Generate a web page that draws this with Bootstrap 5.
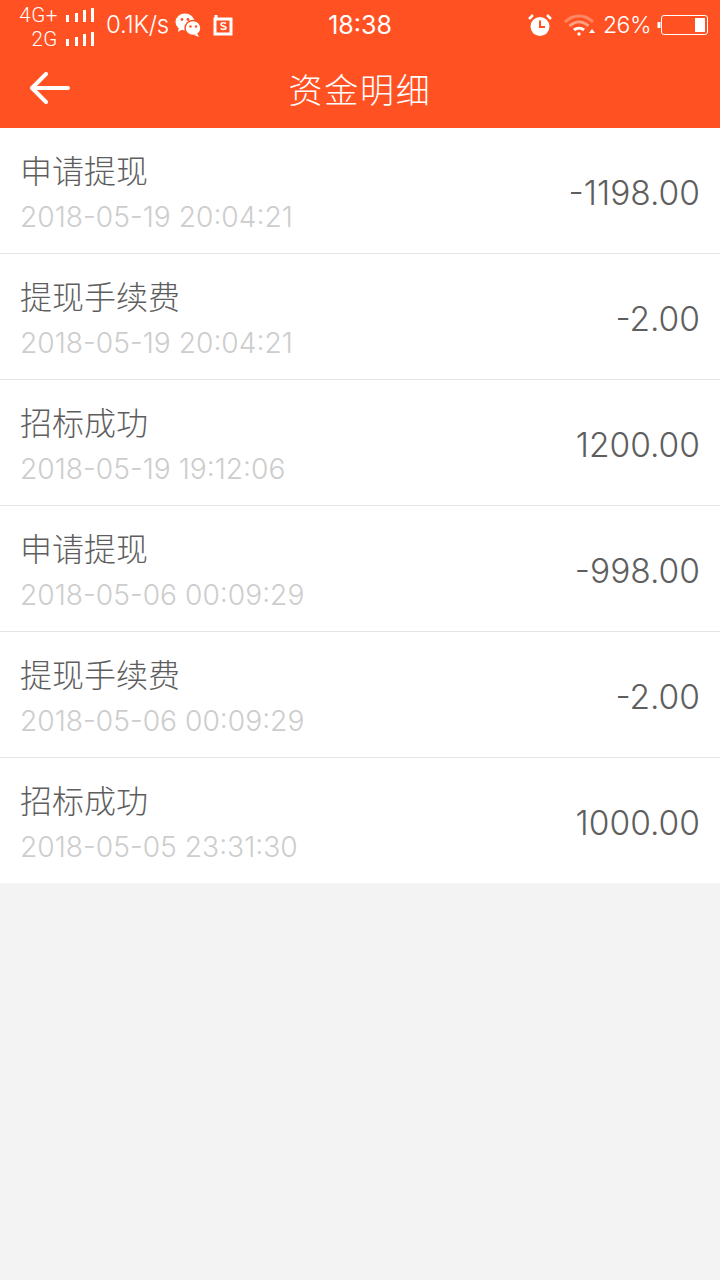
<!DOCTYPE html>
<html lang="zh"><head><meta charset="utf-8">
<link href="https://cdn.jsdelivr.net/npm/bootstrap@5.3.0/dist/css/bootstrap.min.css" rel="stylesheet">
<style>
html,body{height:100%}
body{background:#f3f3f3;width:720px;min-height:1280px;font-family:"Liberation Sans","Noto Sans CJK SC",sans-serif}
.hdr{background:#ff5122;color:#fff;height:128px}
.sbar{height:50px;padding-left:16px;padding-right:12px;font-family:Inter,"Liberation Sans",sans-serif;font-size:24px;font-weight:300}
.net{width:78px;font-family:Roboto,"Liberation Sans",sans-serif;font-size:20.500px;margin-top:4px;letter-spacing:.6px}
.netline{height:24px;line-height:24px;gap:7px}
.speed{margin-left:12px;width:65px;letter-spacing:-.3px;white-space:nowrap}
.wx{margin-left:4px}
.sim{margin-left:12px}
.clock{position:absolute;left:0;right:0;text-align:center;font-size:25px;font-weight:400;top:7px;pointer-events:none}
.pct{font-size:23px;margin-left:6px;width:49px;letter-spacing:-.5px}
.wifi{margin-left:11px}
.ttl{height:78px;position:relative}
.ttl h1{font-family:"Noto Sans CJK SC",sans-serif;font-weight:300;font-size:34px;margin:0;line-height:78px;text-align:center;letter-spacing:1.800px}
.bk{position:absolute;left:29px;top:22px}
.rw{height:126px;background:#fff;border-bottom:1px solid #e4e4e4;padding:0 20px}
.rw:last-child{border-bottom:0;height:125px}
.nm{font-family:"Noto Sans CJK SC",sans-serif;font-size:32px;line-height:44px;color:#5e5e5e;font-weight:300;margin-top:2px}
.dt{font-family:Inter,"Liberation Sans",sans-serif;font-size:28.200px;line-height:38px;color:#cdcdcd;font-weight:300;margin-top:7px;white-space:nowrap}
.amt{font-family:Inter,"Liberation Sans",sans-serif;font-size:33.500px;color:#5e5e5e;font-weight:300;margin-top:6px}
</style></head><body>
<div class="hdr position-relative">
 <div class="sbar d-flex align-items-center position-relative">
  <div class="net text-end">
   <div class="netline d-flex justify-content-end align-items-center">4G+<svg width="29" height="16" viewBox="0 0 29 16" fill="#fff"><rect x="1" y="8" width="3" height="7"/><rect x="10" y="6" width="3" height="9"/><rect x="18" y="3" width="3" height="12"/><rect x="26" y="1" width="3" height="14"/></svg></div>
   <div class="netline d-flex justify-content-end align-items-center">2G<svg width="29" height="16" viewBox="0 0 29 16" fill="#fff"><rect x="1" y="8" width="3" height="7"/><rect x="10" y="6" width="3" height="9"/><rect x="18" y="3" width="3" height="12"/><rect x="26" y="1" width="3" height="14"/></svg></div>
  </div>
  <span class="speed">0.1K/s</span>
  <svg class="wx" width="26" height="24" viewBox="0 0 26 24" fill="#fff"><ellipse cx="10" cy="9" rx="9.500" ry="8.500"/><path d="M4 14l-1 5 5-3z"/><ellipse cx="18" cy="15" rx="8" ry="7.500" stroke="#ff5122" stroke-width="1.500"/><path d="M22 20l2 4-5-2z"/><circle cx="7" cy="6.500" r="1.400" fill="#ff5122"/><circle cx="13" cy="6.500" r="1.400" fill="#ff5122"/><circle cx="15.500" cy="13.500" r="1.200" fill="#ff5122"/><circle cx="21" cy="13.500" r="1.200" fill="#ff5122"/></svg>
  <svg class="sim" width="20" height="22" viewBox="0 0 20 22" fill="none" stroke="#fff" stroke-width="3"><path d="M3 1v3M2 5h16v15H2z"/><path d="M13 9.500c-1-1-5-1.200-5 1 0 2.200 5 1 5 3.200 0 2-4 2-5.500.8" stroke-width="1.600"/></svg>
  <div class="clock">18:38</div>
  <div class="ms-auto d-flex align-items-center">
   <svg width="24" height="24" viewBox="0 0 24 24"><circle cx="12" cy="13.500" r="9.500" fill="#fff"/><path d="M12 7.500v6.500h5" stroke="#ff5122" stroke-width="2" fill="none"/><path d="M1 6l4-4M23 6l-4-4" stroke="#fff" stroke-width="2.500" fill="none"/></svg>
   <svg class="wifi" width="34" height="24" viewBox="0 0 34 24" fill="none" stroke="#fff" stroke-width="3"><path d="M2 9c8-8 20-8 28 0" opacity=".3"/><path d="M6.500 13c6-5.500 13-5.500 19 0" opacity=".45"/><path d="M11 17c3-2.500 7-2.500 10 0"/><circle cx="16" cy="21" r="1.700" fill="#fff" stroke="none"/><path d="M26 20l3-4 3 4z" fill="#fff" stroke="none"/></svg>
   <span class="pct">26%</span>
   <svg class="ms-1" width="52" height="20" viewBox="0 0 52 20" fill="none"><path d="M3 7v6" stroke="#fff" stroke-width="3"/><rect x="5.500" y=".5" width="46" height="19" rx="2.500" stroke="#fff"/><rect x="39" y="3" width="10" height="14" fill="#fff"/></svg>
  </div>
 </div>
 <div class="ttl">
  <svg class="bk" width="42" height="32" viewBox="0 0 42 32" fill="none" stroke="#fff" stroke-width="4" stroke-linecap="round" stroke-linejoin="round"><path d="M39 16H3M17 2L3 16l14 14"/></svg>
  <h1>资金明细</h1>
 </div>
</div>
<div class="lst">
 <div class="rw d-flex justify-content-between align-items-center"><div><div class="nm">申请提现</div><div class="dt">2018-05-19 20:04:21</div></div><div class="amt">-1198.00</div></div>
 <div class="rw d-flex justify-content-between align-items-center"><div><div class="nm">提现手续费</div><div class="dt">2018-05-19 20:04:21</div></div><div class="amt">-2.00</div></div>
 <div class="rw d-flex justify-content-between align-items-center"><div><div class="nm">招标成功</div><div class="dt">2018-05-19 19:12:06</div></div><div class="amt">1200.00</div></div>
 <div class="rw d-flex justify-content-between align-items-center"><div><div class="nm">申请提现</div><div class="dt">2018-05-06 00:09:29</div></div><div class="amt">-998.00</div></div>
 <div class="rw d-flex justify-content-between align-items-center"><div><div class="nm">提现手续费</div><div class="dt">2018-05-06 00:09:29</div></div><div class="amt">-2.00</div></div>
 <div class="rw d-flex justify-content-between align-items-center"><div><div class="nm">招标成功</div><div class="dt">2018-05-05 23:31:30</div></div><div class="amt">1000.00</div></div>
</div>
<script src="https://cdn.jsdelivr.net/npm/bootstrap@5.3.0/dist/js/bootstrap.bundle.min.js"></script>
</body></html>
